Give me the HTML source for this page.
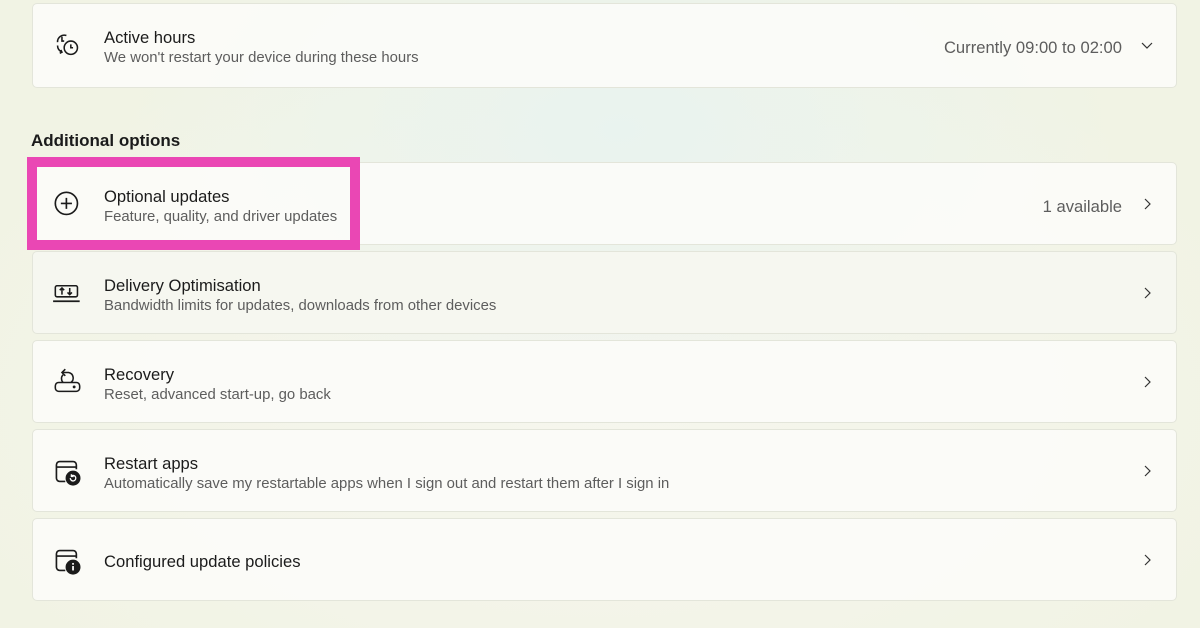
<!DOCTYPE html>
<html><head><style>
*{margin:0;padding:0;box-sizing:border-box}
body{width:1200px;height:628px;overflow:hidden;font-family:"Liberation Sans",sans-serif;color:#1b1b1b;
background:radial-gradient(ellipse 500px 300px at 620px 130px,#e9f3ef 0%,rgba(233,243,239,0) 100%),radial-gradient(ellipse 700px 400px at 600px 400px,#f6f6ee 0%,rgba(246,246,238,0) 100%),#f1f3e4;position:relative}
.card{position:absolute;left:32px;width:1145px;height:83px;background:rgba(252,252,249,0.88);border:1px solid #e3e5da;border-radius:5px}
.card.dark{background:rgba(246,247,240,0.95)}
.ic{position:absolute;left:19px;top:26px;width:31px;height:31px}
.t{position:absolute;left:71px;top:24px;font-size:16.6px;color:#1b1b1b}
.s{position:absolute;left:71px;top:46px;font-size:14.9px;color:#5d5d5d}
.t.one{top:33px}
.r{position:absolute;right:54px;top:34px;font-size:16.6px;color:#5d5d5d}
.chev{position:absolute;right:22px;top:34px;width:14px;height:14px}
h2{position:absolute;left:31px;top:131px;font-size:17px;font-weight:bold;color:#1b1b1b}
.pink{position:absolute;left:27px;top:157px;width:333px;height:93px;border:10px solid #ea47b4}
</style></head><body>

<div class="card" style="top:3px;height:85px">
<svg class="ic" viewBox="0 0 28 28" fill="none" stroke="#1b1b1b" stroke-width="1.4"><path d="M13 5a6 6 0 0 0-8 6"/><path d="M9 6v4h2"/><circle cx="17" cy="16" r="6"/><path d="M17 13v3h2"/><path d="M5 14c0 3 2 5 4 6M7 21l2-1-1-2"/></svg>
<div class="t">Active hours</div><div class="s">We won't restart your device during these hours</div>
<div class="r">Currently 09:00 to 02:00</div>
<svg class="chev" viewBox="0 0 14 14" fill="none" stroke="#333" stroke-width="1.2"><path d="M2 5l5 5 5-5"/></svg>
</div>

<h2>Additional options</h2>

<div class="card" style="top:162px">
<svg class="ic" viewBox="0 0 28 28" fill="none" stroke="#1b1b1b" stroke-width="1.5"><circle cx="13" cy="13" r="10"/><path d="M13 8v10M8 13h10"/></svg>
<div class="t">Optional updates</div><div class="s">Feature, quality, and driver updates</div>
<div class="r">1 available</div>
<svg class="chev" viewBox="0 0 14 14" fill="none" stroke="#333" stroke-width="1.2"><path d="M5 2l5 5-5 5"/></svg>
</div>
<div class="pink"></div>

<div class="card dark" style="top:251px">
<svg class="ic" viewBox="0 0 28 28" fill="none" stroke="#1b1b1b" stroke-width="1.4"><rect x="3" y="7" width="20" height="10" rx="1.5"/><path d="M1 21h24" stroke-width="1.6"/><path d="M9 15V9M7 11l2-2 2 2M16 9v6M14 13l2 2 2-2"/></svg>
<div class="t">Delivery Optimisation</div><div class="s">Bandwidth limits for updates, downloads from other devices</div>
<svg class="chev" viewBox="0 0 14 14" fill="none" stroke="#333" stroke-width="1.2"><path d="M5 2l5 5-5 5"/></svg>
</div>

<div class="card" style="top:340px">
<svg class="ic" viewBox="0 0 28 28" fill="none" stroke="#1b1b1b" stroke-width="1.4"><path d="M10 5H15a5 5 0 0 1 2 9"/><path d="M12 2L9 5l3 3"/><path d="M10 7a5 5 0 0 0 0 7"/><rect x="3" y="14" width="22" height="8" rx="3"/><circle cx="20" cy="18" r=".6" fill="#1b1b1b"/></svg>
<div class="t">Recovery</div><div class="s">Reset, advanced start-up, go back</div>
<svg class="chev" viewBox="0 0 14 14" fill="none" stroke="#333" stroke-width="1.2"><path d="M5 2l5 5-5 5"/></svg>
</div>

<div class="card" style="top:429px">
<svg class="ic" viewBox="0 0 28 28" fill="none" stroke="#1b1b1b" stroke-width="1.5"><path d="M12 23H7a3 3 0 0 1-3-3V8a3 3 0 0 1 3-3h12a3 3 0 0 1 3 3v4"/><path d="M4 10h18"/><circle cx="19" cy="20" r="6" fill="#1b1b1b"/><path d="M16.5 20a2.5 2.5 0 1 0 1-2M17.5 16.5v2h2" stroke="#fff" stroke-width="1.2"/></svg>
<div class="t">Restart apps</div><div class="s">Automatically save my restartable apps when I sign out and restart them after I sign in</div>
<svg class="chev" viewBox="0 0 14 14" fill="none" stroke="#333" stroke-width="1.2"><path d="M5 2l5 5-5 5"/></svg>
</div>

<div class="card" style="top:518px">
<svg class="ic" viewBox="0 0 28 28" fill="none" stroke="#1b1b1b" stroke-width="1.5"><path d="M12 23H7a3 3 0 0 1-3-3V8a3 3 0 0 1 3-3h12a3 3 0 0 1 3 3v4"/><path d="M4 10h18"/><circle cx="19" cy="20" r="6" fill="#1b1b1b"/><path d="M19 19v4" stroke="#fff" stroke-width="1.6"/><circle cx="19" cy="17" r=".9" fill="#fff" stroke="none"/></svg>
<div class="t one">Configured update policies</div>
<svg class="chev" viewBox="0 0 14 14" fill="none" stroke="#333" stroke-width="1.2"><path d="M5 2l5 5-5 5"/></svg>
</div>

</body></html>
